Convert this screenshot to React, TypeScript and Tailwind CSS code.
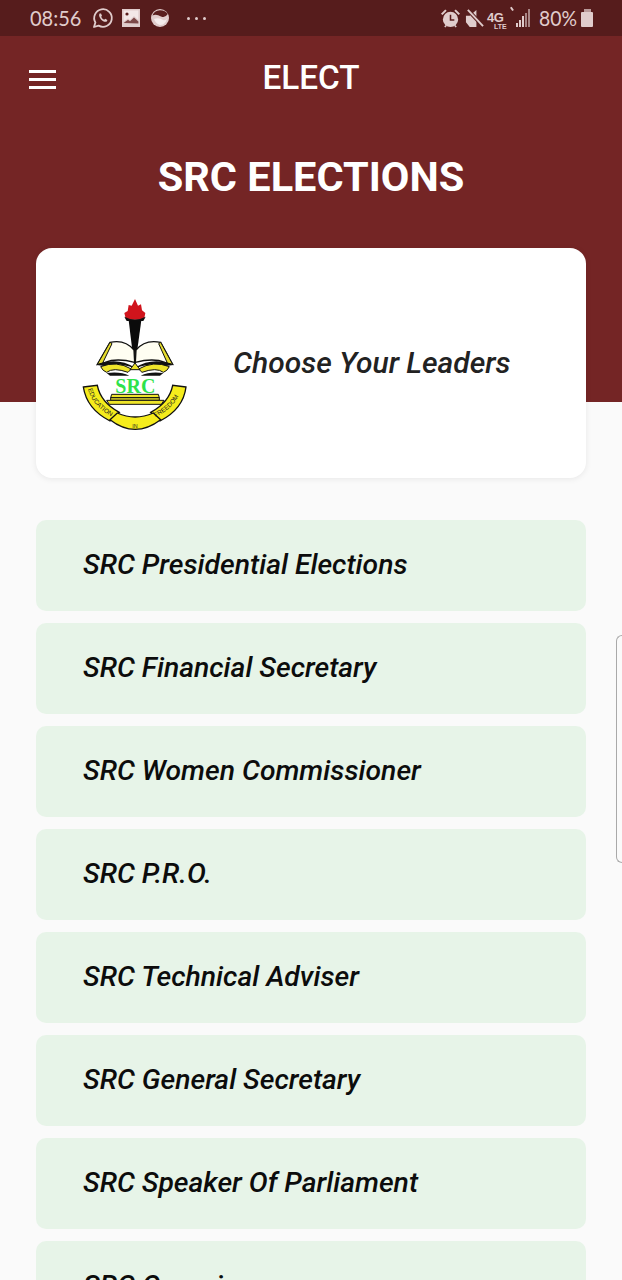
const elections = [
  "SRC Presidential Elections",
  "SRC Financial Secretary",
  "SRC Women Commissioner",
  "SRC P.R.O.",
  "SRC Technical Adviser",
  "SRC General Secretary",
  "SRC Speaker Of Parliament",
  "SRC Organiser",
];

function SrcLogo() {
  return (
    <svg viewBox="0 0 450 480" className="h-[160px] w-[150px] shrink-0 mt-[4px]">
      {/* flame */}
      <path d="M225 42 L234 62 L243 58 L246 76 L256 84 L252 104 L198 104 L193 84 L203 78 L206 60 L215 62 Z" fill="#d0141c" />
      <path d="M193 95 Q225 112 257 95 L250 108 L200 108 Z" fill="#111" />
      {/* torch */}
      <path d="M206 106 L244 106 L226 238 L222 238 Z" fill="#0b0b0b" />
      {/* book */}
      <path d="M112 238 L150 172 Q195 162 222 195 L224 232 Q170 218 135 232 Z" fill="#fffef2" stroke="#111" strokeWidth="4" />
      <path d="M338 238 L302 172 Q255 162 228 195 L226 232 Q280 218 315 232 Z" fill="#fffef2" stroke="#111" strokeWidth="4" />
      <path d="M150 172 L112 238 L128 234 L156 176 Z" fill="#e5dc2c" stroke="#111" strokeWidth="3" />
      <path d="M302 172 L338 238 L322 234 L296 176 Z" fill="#e5dc2c" stroke="#111" strokeWidth="3" />
      <path d="M110 240 Q170 214 225 248 Q280 214 340 240 L318 243 Q270 232 228 250 L222 250 Q180 232 132 243 Z" fill="#111" />
      <path d="M122 245 Q170 226 214 252 L204 262 Q160 246 140 262 Q128 258 122 245 Z" fill="#efe52a" stroke="#111" strokeWidth="3" />
      <path d="M328 245 Q280 226 236 252 L246 262 Q290 246 310 262 Q322 258 328 245 Z" fill="#efe52a" stroke="#111" strokeWidth="3" />
      <path d="M225 234 L240 254 L210 254 Z" fill="#efe52a" stroke="#111" strokeWidth="3" />
      <path d="M140 264 Q180 258 208 272 L242 272 Q270 258 310 264 L300 272 L150 272 Z" fill="#111" />
      {/* SRC */}
      <text x="226" y="323" textAnchor="middle" fontFamily="'Liberation Serif', serif" fontWeight="700" fontSize="60" fill="#2fe24a">
        SRC
      </text>
      {/* plinth */}
      <path d="M155 328 H295 L298 338 H152 Z" fill="#efe52a" stroke="#111" strokeWidth="3" />
      <path d="M152 338 H298 V346 H152 Z" fill="#d6cf2a" stroke="#111" strokeWidth="3" />
      <path d="M140 346 H312 L304 358 H148 Z" fill="#efe52a" stroke="#111" strokeWidth="3" />
      {/* banner */}
      <path d="M70 306 L112 301 Q122 352 178 382 L150 408 Q80 372 70 306 Z" fill="#f5ec1c" stroke="#111" strokeWidth="4" />
      <path d="M378 306 L338 301 Q328 352 272 382 L300 408 Q370 372 378 306 Z" fill="#f5ec1c" stroke="#111" strokeWidth="4" />
      <path d="M150 404 L172 384 Q225 408 280 384 L302 404 Q225 462 150 404 Z" fill="#f5ec1c" stroke="#111" strokeWidth="4" />
      <path id="srcBannerLeft" d="M84 312 Q96 362 156 396" fill="none" />
      <path id="srcBannerRight" d="M286 396 Q348 366 366 310" fill="none" />
      <text fontFamily="'Liberation Sans', sans-serif" fontSize="19" fill="#222">
        <textPath href="#srcBannerLeft">EDUCATION</textPath>
      </text>
      <text fontFamily="'Liberation Sans', sans-serif" fontSize="19" fill="#222">
        <textPath href="#srcBannerRight">FREEDOM</textPath>
      </text>
      <text x="225" y="429" textAnchor="middle" fontFamily="'Liberation Sans', sans-serif" fontSize="16" fill="#222">
        IN
      </text>
    </svg>
  );
}

function StatusLeft() {
  return (
    <div className="flex items-center">
      <span className="block w-[52px] origin-left scale-x-[0.91] whitespace-nowrap font-['Lato',sans-serif] text-[22px] leading-none text-[#e0cccc]">08:56</span>
      {/* whatsapp */}
      <svg viewBox="0 0 22 22" className="ml-[10px] h-[22px] w-[22px]" fill="none" stroke="#e0cccc">
        <path d="M2 20 L3.4 15.4 A8.8 8.8 0 1 1 6.6 18.6 Z" strokeWidth="1.8" strokeLinejoin="round" />
        <path d="M7.6 6.6 C6.6 8 7 10 9 12.4 C11 14.4 13.4 15.4 15 14.2 L15.4 13 L13.2 11.8 L12.2 12.8 C11 12.4 9.8 11.2 9.2 9.8 L10 8.8 L9 6.4 Z" fill="#e0cccc" stroke="none" />
      </svg>
      {/* gallery */}
      <svg viewBox="0 0 18 18" className="ml-[8px] h-[18px] w-[18px]">
        <path d="M0 0 H18 V18 H0 Z" fill="#e0cccc" />
        <path d="M1.6 1.6 H16.4 V11 L12 7 L8 11 L6 9.6 L1.6 12.6 Z" fill="#f3e8e8" />
        <circle cx="5" cy="5" r="1.6" fill="#5a1e1e" />
        <path d="M1.6 14 L6 10.8 L8 12.2 L12 8.4 L16.4 12.6 V14.4 Z" fill="#7d4848" />
      </svg>
      {/* messenger style round icon */}
      <svg viewBox="0 0 20 20" className="ml-[10px] h-[20px] w-[20px]">
        <circle cx="10" cy="10" r="9" fill="#e0cccc" />
        <path d="M2.4 7.6 Q6 5.4 11 8.4 Q15 10.4 17.8 6 Q15.6 2.4 10 2.2 Q4 2.6 2.4 7.6 Z" fill="#5a1e1e" />
        <path d="M4 11 Q9 9 13 12 Q15 13 17 11 Q15 17 10 17 Q6 16 4 11 Z" fill="#f5eded" />
      </svg>
      <div className="ml-[17px] flex gap-[5px]">
        <span className="h-[3px] w-[3px] rounded-full bg-[#e0cccc]" />
        <span className="h-[3px] w-[3px] rounded-full bg-[#e0cccc]" />
        <span className="h-[3px] w-[3px] rounded-full bg-[#e0cccc]" />
      </div>
    </div>
  );
}

function StatusRight() {
  return (
    <div className="flex items-center">
      {/* alarm */}
      <svg viewBox="0 0 22 22" className="h-[21px] w-[21px]">
        <circle cx="11" cy="12" r="8" fill="#e0cccc" />
        <path d="M11 7 V12.6 H15" fill="none" stroke="#5a1e1e" strokeWidth="1.6" />
        <path d="M1 6 L5.5 1.6 L7 3 L2.6 7.4 Z M21 6 L16.5 1.6 L15 3 L19.4 7.4 Z" fill="#e0cccc" />
        <path d="M5 20 L6.8 18 M17 20 L15.2 18" stroke="#e0cccc" strokeWidth="1.6" />
      </svg>
      {/* muted speaker */}
      <svg viewBox="0 0 20 20" className="ml-[4px] h-[19px] w-[19px]">
        <path d="M1 7 H5 L12 1 V19 H5 L1 14 Z" fill="#e0cccc" />
        <path d="M3 1 L19 18" stroke="#5a1e1e" strokeWidth="4" />
        <path d="M3 1 L19 18" stroke="#e0cccc" strokeWidth="2" />
      </svg>
      {/* network type */}
      <div className="relative ml-[3px] h-[22px] w-[24px] font-['Liberation_Sans',sans-serif] font-bold leading-none text-[#e0cccc]">
        <span className="absolute left-0 top-[4px] text-[13px] tracking-[-0.5px]">4G</span>
        <span className="absolute left-[7px] top-[16px] text-[7px]">LTE</span>
        <span className="absolute right-[-1px] top-[0px] h-[4px] w-[1.5px] rotate-[-35deg] bg-[#e0cccc]" />
      </div>
      {/* signal */}
      <div className="ml-[5px] flex h-[18px] items-end gap-px">
        <span className="h-[4px] w-[2px] bg-[#e0cccc]" />
        <span className="h-[7px] w-[2px] bg-[#e0cccc]" />
        <span className="h-[11px] w-[2px] bg-[#e0cccc]" />
        <span className="h-[14px] w-[2px] bg-[#a88585]" />
        <span className="h-[18px] w-[2px] bg-[#a88585]" />
      </div>
      <span className="ml-[9px] block w-[38px] origin-left scale-x-[0.88] whitespace-nowrap font-['Lato',sans-serif] text-[22px] leading-none text-[#e0cccc]">80%</span>
      {/* battery */}
      <div className="ml-[4px] flex flex-col items-center">
        <span className="h-[3px] w-[7px] bg-[#b99a9a]" />
        <span className="h-[15px] w-[12px] rounded-[1px] bg-[#e0cccc]" />
      </div>
    </div>
  );
}

export default function App() {
  return (
    <div className="relative h-[1280px] overflow-hidden bg-[#fafafa] font-['Roboto',sans-serif]">
      <div className="flex h-[36px] items-center justify-between bg-[#561c1c] pl-[30px] pr-[29px]">
        <StatusLeft />
        <StatusRight />
      </div>

      <div className="h-[366px] bg-[#742525]">
        <div className="relative flex h-[82px] items-center justify-center">
          <button className="absolute left-[29px] top-[34px] flex flex-col gap-[5px]">
            <span className="h-[3px] w-[27px] bg-white" />
            <span className="h-[3px] w-[27px] bg-white" />
            <span className="h-[3px] w-[27px] bg-white" />
          </button>
          <h1 className="mt-[2px] text-[33.3px] font-medium leading-none text-white">ELECT</h1>
        </div>
        <h2 className="mt-[36px] text-center text-[41.5px] font-bold leading-[46px] text-white">SRC ELECTIONS</h2>
      </div>

      <div className="-mt-[154px] px-[36px]">
        <div className="flex h-[230px] items-center rounded-[16px] bg-white pl-[24px] shadow-[0_1px_6px_rgba(0,0,0,0.08)]">
          <SrcLogo />
          <p className="ml-[23px] text-[30px] font-medium italic leading-none text-[#222222]">Choose Your Leaders</p>
        </div>

        <ul className="mt-[42px] flex flex-col gap-[12px]">
          {elections.map((name) => (
            <li key={name} className="flex h-[91px] shrink-0 items-center rounded-[10px] bg-[#e7f4e8] pl-[47px]">
              <span className="text-[28.3px] font-medium italic leading-none text-[#0c0c0c]">{name}</span>
            </li>
          ))}
        </ul>
      </div>

      {/* edge panel handle */}
      <div className="absolute right-0 top-[635px] h-[228px] w-[6px] rounded-l-[6px] border border-r-0 border-[#a9a9a9] bg-[#fafafa]" />
    </div>
  );
}
